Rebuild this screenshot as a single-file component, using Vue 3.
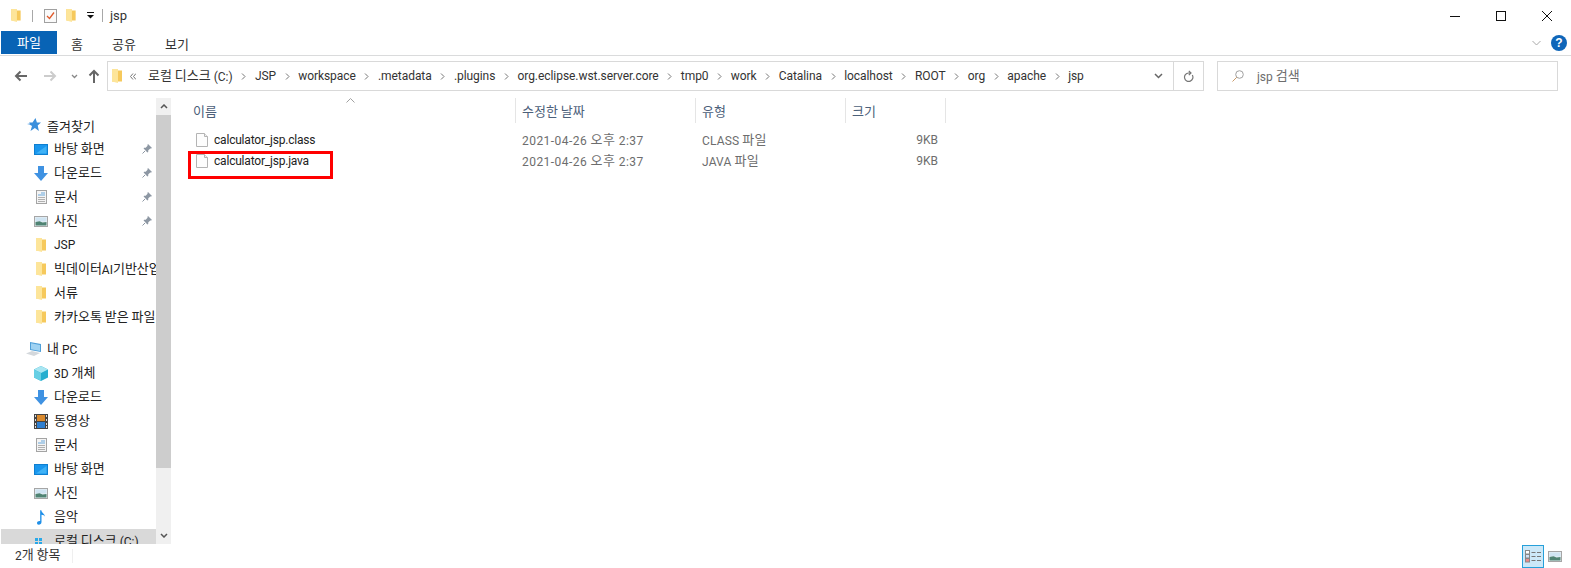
<script setup>
const split = (t) =>
  t.split(/([\uAC00-\uD7A3]+(?:\s+[\uAC00-\uD7A3]+)*)/).filter(Boolean).map((s) => ({ t: s, h: /[\uAC00-\uD7A3]/.test(s) }))
const crumbs = ['JSP','workspace','.metadata','.plugins','org.eclipse.wst.server.core','tmp0','work','Catalina','localhost','ROOT','org','apache','jsp']
const quick = [
  { t: '바탕 화면', i: 'desk', pin: true },
  { t: '다운로드', i: 'down', pin: true },
  { t: '문서', i: 'doc', pin: true },
  { t: '사진', i: 'pic', pin: true },
  { t: 'JSP', i: 'folder' },
  { t: '빅데이터AI기반산업', i: 'folder' },
  { t: '서류', i: 'folder' },
  { t: '카카오톡 받은 파일', i: 'folder' },
]
const pc = [
  { t: '3D 개체', i: 'cube' },
  { t: '다운로드', i: 'down' },
  { t: '동영상', i: 'film' },
  { t: '문서', i: 'doc' },
  { t: '바탕 화면', i: 'desk' },
  { t: '사진', i: 'pic' },
  { t: '음악', i: 'music' },
  { t: '로컬 디스크 (C:)', i: 'win', sel: true },
]
const files = [
  { n: 'calculator_jsp.class', d: '2021-04-26 오후 2:37', k: 'CLASS 파일', s: '9KB' },
  { n: 'calculator_jsp.java', d: '2021-04-26 오후 2:37', k: 'JAVA 파일', s: '9KB' },
]
</script>

<template>
  <div class="win">
    <svg width="0" height="0" class="defs">
      <symbol id="folder" viewBox="0 0 10 14">
        <path d="M0 0h5l1 1.500h4V12.500H0z" fill="#f6c95c"/>
        <path d="M0 0h6v14L0 12.500z" fill="#fde59a"/>
      </symbol>
      <symbol id="desk" viewBox="0 0 14 11">
        <rect x="0.500" y="0.500" width="13" height="10" fill="#1a97ee" stroke="#0f7fd0"/>
        <path d="M2 9.500 L12.500 9.500 L12.500 2z" fill="#3fb2f6"/>
      </symbol>
      <symbol id="down" viewBox="0 0 14 15">
        <path d="M4 0h6v7h4l-7 8-7-8h4z" fill="#3f92e2"/>
      </symbol>
      <symbol id="doc" viewBox="0 0 11 14">
        <rect x="0.500" y="0.500" width="10" height="13" fill="#f4f4f4" stroke="#a4a4a4"/>
        <path d="M5 3h4M2 5h7" stroke="#6aa9dc"/>
        <path d="M2 7.500h7M2 9.500h7M2 11.500h7" stroke="#b0b0b0"/>
      </symbol>
      <symbol id="pic" viewBox="0 0 14 11">
        <rect x="0.500" y="0.500" width="13" height="10" fill="#e8f0f4" stroke="#a6a6a6"/>
        <rect x="1.500" y="1.500" width="11" height="4" fill="#cfe4f2"/>
        <path d="M1.500 9.500V6l4-.8 3 1.300 4-.5v3.500z" fill="#4f8373"/>
      </symbol>
      <symbol id="pin" viewBox="0 0 10 10">
        <path d="M6 0l4 4-1 .6-.7-.2L6.300 6.300 6.200 8 5.400 8.400 1.600 4.600 2 3.800l1.700-.1L5.600 1.700 5.400 1z" fill="#8d97a3"/>
        <path d="M3 7L0.500 9.500" stroke="#8d97a3"/>
      </symbol>
      <symbol id="file" viewBox="0 0 12 14">
        <path d="M.5.500h8l3 3v10H.5z" fill="#fdfdfd" stroke="#b4b4b4"/>
        <path d="M8.500.500v3h3" fill="#f0f0f0" stroke="#b4b4b4"/>
      </symbol>
    </svg>

    <header class="title">
      <svg width="10" height="13"><use href="#folder"/></svg>
      <i class="vsep"></i>
      <svg width="13" height="14" viewBox="0 0 13 14" class="chk">
        <rect x="0.500" y="0.500" width="12" height="13" fill="#fafafa" stroke="#a0a0a0"/>
        <path d="M3 7l2.500 2.500L10 3.500" fill="none" stroke="#e05a2b" stroke-width="1.300"/>
      </svg>
      <svg class="fold2" width="10" height="13"><use href="#folder"/></svg>
      <svg class="qdrop" width="7" height="7" viewBox="0 0 7 7">
        <path d="M0 .5h7" stroke="#111"/><path d="M0 3h7L3.500 6.500z" fill="#111"/>
      </svg>
      <i class="vsep v2"></i>
      <span class="ttl">jsp</span>
      <span class="grow"></span>
      <div class="wbtns">
        <svg width="12" height="12" viewBox="0 0 12 12"><path d="M1 6.500h10" stroke="#111"/></svg>
        <svg width="12" height="12" viewBox="0 0 12 12"><rect x="1.500" y="1.500" width="9" height="9" fill="none" stroke="#111"/></svg>
        <svg width="12" height="12" viewBox="0 0 12 12"><path d="M1 1l10 10M11 1L1 11" stroke="#111"/></svg>
      </div>
    </header>

    <nav class="tabs">
      <span class="tab file">파일</span>
      <span class="tab home">홈</span>
      <span class="tab share">공유</span>
      <span class="tab view">보기</span>
      <span class="grow"></span>
      <svg class="collapse" width="9" height="6" viewBox="0 0 9 6"><path d="M.5 1l4 4 4-4" fill="none" stroke="#a8a8a8"/></svg>
      <span class="help">?</span>
    </nav>

    <div class="addrrow">
      <svg class="nav" width="13" height="12" viewBox="0 0 13 12"><path d="M13 6H2M6.500 1.500L2 6l4.500 4.500" fill="none" stroke="#666" stroke-width="2"/></svg>
      <svg class="nav n2" width="13" height="12" viewBox="0 0 13 12"><path d="M0 6h11M6.500 1.500L11 6l-4.500 4.500" fill="none" stroke="#ccc" stroke-width="2"/></svg>
      <svg class="nav n3" width="7" height="5" viewBox="0 0 7 5"><path d="M1 1l2.500 2.500L6 1" fill="none" stroke="#888" stroke-width="1.300"/></svg>
      <svg class="nav n4" width="12" height="14" viewBox="0 0 12 14"><path d="M6 14V2M1.500 6.500L6 2l4.500 4.500" fill="none" stroke="#666" stroke-width="2"/></svg>
      <div class="addr">
        <svg width="10" height="14"><use href="#folder"/></svg>
        <svg class="dbl" width="6" height="7" viewBox="0 0 6 7"><path d="M3 .5l-2.500 3 2.500 3M6 .5l-2.500 3 2.500 3" fill="none" stroke="#777"/></svg>
        <span class="c first"><span class="h">로컬 디스크</span> (C:)</span>
        <template v-for="c in crumbs" :key="c">
          <svg class="sep" width="5" height="7" viewBox="0 0 5 7"><path d="M1 .5l3 3-3 3" fill="none" stroke="#777"/></svg>
          <span class="c tight">{{ c }}</span>
        </template>
        <span class="grow"></span>
        <svg class="addrdrop" width="9" height="6" viewBox="0 0 9 6"><path d="M1 1l3.500 3.500L8 1" fill="none" stroke="#666" stroke-width="1.500"/></svg>
        <span class="refresh">
          <svg width="11" height="12" viewBox="0 0 11 12"><path d="M9.300 5A4.200 4.200 0 1 1 5.500 3H8M5.800.8L8 3 5.800 5.200" fill="none" stroke="#777" stroke-width="1.200"/></svg>
        </span>
      </div>
      <div class="search">
        <svg width="12" height="12" viewBox="0 0 12 12"><circle cx="7.500" cy="4.500" r="3.800" fill="none" stroke="#a0a0a0"/><path d="M4.800 7.200L.5 11.500" stroke="#c99a6a"/></svg>
        <span>jsp <span class="h">검색</span></span>
      </div>
    </div>

    <div class="body">
      <aside class="side">
        <div class="tree">
          <div class="node head">
            <svg width="14" height="14" viewBox="0 0 14 14"><path d="M8.500 0l1.400 4.500H14l-3.300 2.900 1.200 5.600-4-3L3.500 13 5 8 2.500 6.500 0 6l3-.5-1-1h3.500z" fill="#3a8fdc"/></svg>
            <span class="h">즐겨찾기</span>
          </div>
          <div v-for="r in quick" :key="r.t" class="node">
            <span class="ico"><svg :class="r.i"><use :href="'#' + r.i"/></svg></span>
            <span><span v-for="(s, k) in split(r.t)" :key="k" :class="{ h: s.h }">{{ s.t }}</span></span>
            <svg v-if="r.pin" class="pin" width="10" height="10"><use href="#pin"/></svg>
          </div>
          <div class="gap"></div>
          <div class="node head pch">
            <svg width="16" height="14" viewBox="0 0 16 14"><path d="M4 0l11 2v8L4 8z" fill="#4f9fd8"/><path d="M5 1.300l9 1.600v6L5 7.300z" fill="#9fd2f2"/><path d="M0 11.500l6-2.500 8 2-6 3z" fill="#d4d8dc"/></svg>
            <span><span class="h">내</span> PC</span>
          </div>
          <div v-for="r in pc" :key="r.i" class="node" :class="{ sel: r.sel }">
            <span class="ico">
              <svg v-if="r.i === 'cube'" class="cube" viewBox="0 0 14 15"><path d="M7 0l7 3.500v8L7 15 0 11.500v-8z" fill="#27aecf"/><path d="M7 0l7 3.500L7 7 0 3.500z" fill="#a9e6f2"/><path d="M7 7v8L0 11.500v-8z" fill="#66cfe4"/></svg>
              <svg v-else-if="r.i === 'film'" class="film" viewBox="0 0 14 15"><rect width="14" height="15" fill="#444"/><rect x="3" y="1" width="8" height="6" fill="#d9892d"/><rect x="3" y="8" width="8" height="6" fill="#2f7fd0"/><path d="M1 1h1v2H1zM1 5h1v2H1zM1 9h1v2H1zM1 12h1v2H1zM12 1h1v2h-1zM12 5h1v2h-1zM12 9h1v2h-1zM12 12h1v2h-1z" fill="#ddd"/></svg>
              <svg v-else-if="r.i === 'music'" class="music" viewBox="0 0 10 16"><path d="M3.500 0h1.300c.3 3 4.200 4 4.200 7.500C9 6 6.500 5 5 5v8c0 2-1.500 3-3 3S0 15 0 13.800 1.500 11.500 3.500 11.800z" fill="#1f8fe8"/></svg>
              <svg v-else-if="r.i === 'win'" class="win-ic" viewBox="0 0 7 7"><path d="M0 0h3v3H0zM4 0h3v3H4zM0 4h3v3H0zM4 4h3v3H4z" fill="#29a8e8"/></svg>
              <svg v-else :class="r.i"><use :href="'#' + r.i"/></svg>
            </span>
            <span><span v-for="(s, k) in split(r.t)" :key="k" :class="{ h: s.h }">{{ s.t }}</span></span>
          </div>
        </div>
        <div class="sbar">
          <svg class="sup" width="8" height="5" viewBox="0 0 8 5"><path d="M1 4l3-3 3 3" fill="none" stroke="#555" stroke-width="1.500"/></svg>
          <div class="thumb"></div>
          <span class="grow"></span>
          <svg class="sdn" width="8" height="5" viewBox="0 0 8 5"><path d="M1 1l3 3 3-3" fill="none" stroke="#555" stroke-width="1.500"/></svg>
        </div>
      </aside>

      <main class="list">
        <div class="cols">
          <div class="col c1"><span class="h">이름</span><svg class="sort" width="9" height="5" viewBox="0 0 9 5"><path d="M.5 4.500l4-4 4 4" fill="none" stroke="#a0a0a0"/></svg></div>
          <div class="col c2"><span class="h">수정한 날짜</span></div>
          <div class="col c3"><span class="h">유형</span></div>
          <div class="col c4"><span class="h">크기</span></div>
        </div>
        <div class="rows">
          <div v-for="f in files" :key="f.n" class="row">
            <div class="rn"><svg width="12" height="14"><use href="#file"/></svg><span class="fname">{{ f.n }}</span></div>
            <div class="rd"><span v-for="(s, k) in split(f.d)" :key="k" :class="{ h: s.h }">{{ s.t }}</span></div>
            <div class="rk"><span v-for="(s, k) in split(f.k)" :key="k" :class="{ h: s.h }">{{ s.t }}</span></div>
            <div class="rs">{{ f.s }}</div>
          </div>
          <div class="mark"></div>
        </div>
      </main>
    </div>

    <footer class="status">
      <span class="count">2<span class="h">개 항목</span></span>
      <i class="sdiv"></i>
      <span class="grow"></span>
      <span class="vbtn on">
        <svg width="17" height="13" viewBox="0 0 17 13">
          <rect x=".5" y=".5" width="4" height="3.500" fill="#fff" stroke="#888"/>
          <rect x=".5" y="4.500" width="4" height="3.500" fill="#cfe0f5" stroke="#888"/>
          <rect x=".5" y="8.500" width="4" height="3.500" fill="#e88" stroke="#888"/>
          <path d="M6.500 2.500h4M12 2.500h4M6.500 6.500h4M12 6.500h4M6.500 10.500h4M12 10.500h4" stroke="#777"/>
        </svg>
      </span>
      <span class="vbtn">
        <svg width="14" height="11"><use href="#pic"/></svg>
      </span>
    </footer>
  </div>
</template>

<style scoped>
.win {
  width: 1571px;
  height: 568px;
  display: flex;
  flex-direction: column;
  overflow: hidden;
  background: #fff;
  color: #1a1a1a;
  font: 12px Roboto, "Noto Sans CJK KR", sans-serif;
}
.h { font-size: 13px; font-family: "Noto Sans CJK KR", sans-serif; line-height: 1; vertical-align: 1px; }
.defs { position: absolute; }
.grow { flex: 1; }
.title {
  height: 31px;
  flex: none;
  display: flex;
  align-items: center;
  padding-left: 11px;
}
.vsep { width: 1px; height: 12px; background: #a8a8a8; margin-left: 11px; }
.chk { margin-left: 11px; }
.fold2 { margin-left: 9px; }
.qdrop { margin-left: 11px; }
.v2 { margin-left: 8px; height: 13px; }
.ttl { margin-left: 7px; font-size: 13px; color: #333; }
.wbtns { display: flex; gap: 34px; padding-right: 18px; }
.tabs {
  height: 24px;
  flex: none;
  display: flex;
  align-items: center;
  padding-left: 1px;
  border-bottom: 1px solid #dadbdc;
}
.tab { text-align: center; line-height: 21px; color: #333; font-size: 13px; font-family: "Noto Sans CJK KR", sans-serif; }
.file { width: 56px; background: #0863b5; color: #fff; height: 23px; align-self: flex-start; }
.home { width: 40px; }
.share { width: 54px; }
.view { width: 52px; }
.collapse { margin-right: 10px; }
.help {
  width: 16px;
  height: 16px;
  border-radius: 50%;
  background: #0f66b9;
  color: #fff;
  font: bold 12px/16px "Liberation Sans", sans-serif;
  text-align: center;
  margin-right: 4px;
}
.addrrow {
  height: 30px;
  flex: none;
  margin-top: 5px;
  display: flex;
  align-items: center;
  padding-left: 14px;
}
.nav { flex: none; }
.n2 { margin-left: 17px; }
.n3 { margin-left: 14px; }
.n4 { margin-left: 10px; }
.addr {
  margin-left: 7px;
  width: 1097px;
  height: 30px;
  box-sizing: border-box;
  border: 1px solid #d9d9d9;
  display: flex;
  align-items: center;
  padding-left: 4px;
  flex: none;
  white-space: nowrap;
}
.dbl { margin-left: 8px; flex: none; }
.c { color: #333; }
.tight { letter-spacing: -0.06px; }
.first { margin-left: 12px; }
.sep { margin: 0 8.6px; flex: none; }
.addrdrop { margin-right: 10px; }
.refresh {
  width: 30px;
  height: 28px;
  border-left: 1px solid #d9d9d9;
  box-sizing: border-box;
  display: flex;
  align-items: center;
  justify-content: center;
}
.search {
  margin-left: 13px;
  width: 341px;
  height: 30px;
  box-sizing: border-box;
  border: 1px solid #d9d9d9;
  display: flex;
  align-items: center;
  padding-left: 14px;
  gap: 13px;
  color: #6d6d6d;
  flex: none;
}
.body { flex: 1; min-height: 0; display: flex; overflow: hidden; }
.side { width: 171px; flex: none; display: flex; margin-top: 7px; }
.tree { width: 155px; margin-left: 1px; padding-top: 15px; overflow: hidden; flex: none; }
.gap { height: 8px; }
.node {
  height: 24px;
  display: flex;
  align-items: center;
  position: relative;
  padding-left: 33px;
  white-space: nowrap;
  color: #222;
}
.node.head { padding-left: 26px; gap: 6px; }
.node.pch { padding-left: 25px; gap: 5px; }
.ico { width: 14px; height: 16px; display: flex; align-items: center; justify-content: center; flex: none; margin-right: 6px; }
.desk, .pic { width: 14px; height: 11px; flex: none; }
.down { width: 14px; height: 15px; flex: none; }
.doc { width: 11px; height: 14px; flex: none; }
.folder { width: 10px; height: 14px; flex: none; }
.cube, .film { width: 14px; height: 15px; flex: none; }
.music { width: 9px; height: 15px; flex: none; }
.win-ic { width: 7px; height: 7px; flex: none; margin-left: -6px; }
.pin { position: absolute; left: 141px; top: 7px; }
.sel { background: #d9d9d9; width: 155px; box-sizing: border-box; }
.sbar {
  width: 15px;
  background: #f0f0f0;
  display: flex;
  flex-direction: column;
  align-items: center;
}
.sup { margin: 6px 0; flex: none; }
.thumb { width: 15px; height: 353px; background: #cdcdcd; flex: none; }
.sdn { margin-bottom: 6px; flex: none; }
.list { flex: 1; min-width: 0; padding-left: 2px; margin-top: 7px; }
.cols { display: flex; height: 25px; }
.col {
  position: relative;
  display: flex;
  align-items: center;
  padding-left: 6px;
  border-right: 1px solid #e5e5e5;
  color: #4c607a;
  box-sizing: border-box;
}
.c1 { width: 343px; padding-left: 20px; }
.c2 { width: 180px; }
.c3 { width: 150px; }
.c4 { width: 100px; }
.sort { position: absolute; left: 173px; top: 0; }
.rows { position: relative; margin-top: 6px; padding-left: 23px; }
.row { display: flex; height: 21px; align-items: center; color: #6d6d6d; }
.rn { width: 326px; display: flex; align-items: center; gap: 6px; color: #222; flex: none; }
.fname { letter-spacing: -0.2px; }
.rd { width: 180px; flex: none; letter-spacing: 0.45px; }
.rk { width: 150px; flex: none; letter-spacing: 0.15px; }
.rs { width: 86px; text-align: right; flex: none; }
.mark {
  position: absolute;
  left: 15px;
  top: 22px;
  width: 145px;
  height: 28px;
  box-sizing: border-box;
  border: 3px solid #f00;
}
.status {
  height: 24px;
  flex: none;
  display: flex;
  align-items: center;
  padding-left: 15px;
  padding-right: 5px;
  color: #333;
}
.count { width: 57px; flex: none; margin-bottom: 2px; }
.sdiv { width: 1px; height: 14px; background: #efefef; }
.vbtn { width: 22px; height: 23px; display: flex; align-items: center; justify-content: center; box-sizing: border-box; }
.vbtn.on { background: #cce8f8; border: 1px solid #26a0da; }
</style>

<style>
html, body { margin: 0; background: #fff; }
</style>
